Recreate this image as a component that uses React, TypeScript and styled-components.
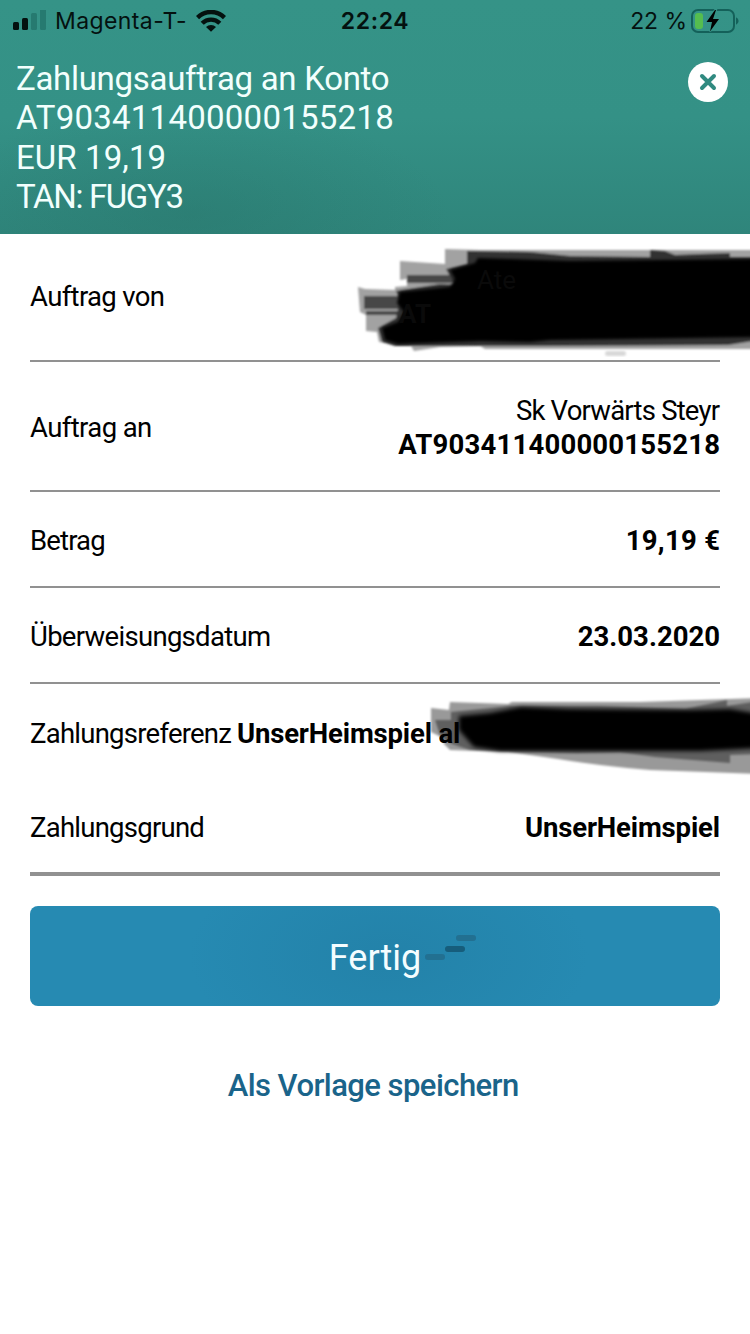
import React from 'react';
import styled, { createGlobalStyle } from 'styled-components';

const GlobalStyle = createGlobalStyle`
  * { box-sizing: border-box; }
  body { margin: 0; background: #fff; }
`;

const Screen = styled.main`
  width: 750px;
  height: 1334px;
  overflow: hidden;
  background: #fff;
  color: #000;
  font-family: Roboto, sans-serif;
`;

const Header = styled.header`
  height: 234px;
  background:
    radial-gradient(ellipse 260px 110px at 190px 215px, rgba(38, 112, 102, 0.35), transparent),
    linear-gradient(#359387 0%, #349186 50%, #2f857b 100%);
`;

const StatusBar = styled.div`
  height: 40px;
  display: grid;
  grid-template-columns: 1fr auto 1fr;
  align-items: center;
  padding: 0 11px 0 13px;
  color: #04110f;
  font: 400 23px/42px Inter, sans-serif;
`;

const StatusGroup = styled.div<{ $end?: boolean; $gap: number }>`
  display: flex;
  align-items: center;
  justify-content: ${p => (p.$end ? 'flex-end' : 'flex-start')};
  gap: ${p => p.$gap}px;
`;

const Label = styled.span<{ $spacing?: number; $bold?: boolean }>`
  white-space: nowrap;
  letter-spacing: ${p => p.$spacing ?? 0}px;
  margin-right: ${p => -(p.$spacing ?? 0)}px;
  font-weight: ${p => (p.$bold ? 700 : 'inherit')};
`;

const Clock = styled(Label)`
  margin-right: 2px;
  font-weight: 600;
`;

const HeaderBody = styled.div`
  display: flex;
  justify-content: space-between;
  align-items: flex-start;
  padding: 19px 22px 0 16px;
`;

const Title = styled.h1`
  display: flex;
  flex-direction: column;
  margin: 0;
  color: #f2fffd;
  font-size: 33px;
  font-weight: 400;
  line-height: 39.3px;
`;

const CloseButton = styled.button`
  width: 40px;
  height: 40px;
  margin-top: 3px;
  padding: 0;
  border: 0;
  border-radius: 50%;
  background: #fff;
  display: grid;
  place-items: center;
`;

const Details = styled.section`
  margin: 0 30px;
`;

const Row = styled.div<{ $height: number; $rule?: number }>`
  position: relative;
  height: ${p => p.$height}px;
  padding-top: 3px;
  display: flex;
  align-items: center;
  justify-content: space-between;
  border-bottom: ${p => p.$rule ?? 0}px solid #919191;
  font-size: 27.5px;
  line-height: 34px;

  &:first-child { padding-top: 0; }
`;

const Value = styled.div`
  display: flex;
  flex-direction: column;
  align-items: flex-end;
`;

const Reference = styled.div`
  display: flex;
  gap: 5px;
`;

const Marker = styled.svg<{ $left: number; $top: number }>`
  position: absolute;
  left: ${p => p.$left}px;
  top: ${p => p.$top}px;
  pointer-events: none;
`;

const Actions = styled.footer`
  padding: 30px 30px 0;
  display: flex;
  flex-direction: column;
  align-items: center;
`;

const PrimaryButton = styled.button`
  position: relative;
  width: 100%;
  height: 100px;
  padding: 3px 0 0;
  border: 0;
  border-radius: 8px;
  background: radial-gradient(ellipse 200px 110px at 52% 50%, #2382a9, #268ab2);
  color: #f4fdff;
  font: 400 36px/50px Roboto, sans-serif;
`;

const TextButton = styled.button`
  margin-top: 59px;
  padding: 0 3px 0 0;
  border: 0;
  background: none;
  color: #1a648a;
  font: 500 31px/42px Roboto, sans-serif;
`;

const SignalIcon = () => (
  <svg width="33" height="22" viewBox="0 0 33 22">
    <rect x="0" y="12" width="6" height="8" rx="1.5" fill="#04110f" />
    <rect x="9" y="8" width="6" height="12" rx="1.5" fill="#04110f" />
    <rect x="18" y="3" width="6" height="17" rx="1.5" fill="#267a70" />
    <rect x="27" y="-1" width="6" height="21" rx="1.5" fill="#267a70" />
  </svg>
);

const WifiIcon = () => (
  <svg width="30" height="22" viewBox="0 0 30 22">
    <g fill="none" stroke="#04110f" strokeWidth="4.4">
      <path d="M1.5 7.6a19 19 0 0 1 27 0" />
      <path d="M6.2 13.2a12.5 12.5 0 0 1 17.6 0" />
    </g>
    <path d="M10 17a7.6 7.6 0 0 1 10 0l-5 4.7z" fill="#04110f" />
  </svg>
);

const BatteryIcon = () => (
  <svg width="48" height="24" viewBox="0 0 48 24">
    <rect x="1" y="1" width="42" height="22" rx="6" fill="none" stroke="#14615a" strokeWidth="2" />
    <path d="M45 8.2q2.6 1.2 2.6 3.8t-2.6 3.8z" fill="#14615a" />
    <rect x="4" y="4" width="8" height="16" rx="3" fill="#55bd4f" />
    <path d="M24 1 15.5 13H21l-2 9.5L28 10h-6l3-9z" fill="#000" stroke="#359387" strokeWidth="2" paintOrder="stroke" />
  </svg>
);

const SenderMarks = () => (
  <Marker $left={320} $top={6} width="400" height="120" viewBox="350 240 400 120">
    <defs>
      <filter id="soft" x="-5%" y="-10%" width="110%" height="120%">
        <feGaussianBlur stdDeviation="0.9" />
      </filter>
      <filter id="softer" x="-5%" y="-10%" width="110%" height="120%">
        <feGaussianBlur stdDeviation="1.8" />
      </filter>
    </defs>
    <g filter="url(#soft)">
      <path d="M445 249L480 250H760V349H485L480 346L440 347L414 351L411 346L379 342L377 332L366 331V315L360 312L358 287L365 289L395 290V287L407 286V279L400 280V261L445 264Z" fill="#a2a2a2" />
      <path d="M364 296H400V309H364ZM366 311H400V315H366ZM407 275H460V283H407Z" fill="#474747" />
      <path d="M467 251L530 252L570 256L650 257V250L665 251L675 255L700 254L730 253V257H760V340L728 345L540 346L490 346L395 346L382 342L378 328L396 318L400 300L396 291L440 284L455 285L446 269L467 264Z" fill="#333" />
    </g>
    <path d="M450 270L475 263L478 258L570 261L760 259V337L550 340L530 342L480 341L398 344L385 340L382 328L398 322L404 312L397 303L400 292L450 287L455 279Z" fill="#000" filter="url(#softer)" />
    <g fill="#0a0a0a" fontSize="26">
      <text x="477" y="289">Ate</text>
      <text x="399" y="323" fontWeight="700">AT</text>
    </g>
    <rect x="605" y="351" width="21" height="5" rx="2.5" fill="#d8d8d8" filter="url(#soft)" />
  </Marker>
);

const ReferenceMarks = () => (
  <Marker $left={390} $top={6} width="330" height="100" viewBox="420 690 330 100">
    <defs>
      <filter id="soft-reference" x="-5%" y="-15%" width="110%" height="130%">
        <feGaussianBlur stdDeviation="1" />
      </filter>
      <filter id="softer-reference" x="-5%" y="-30%" width="110%" height="160%">
        <feGaussianBlur stdDeviation="2.2" />
      </filter>
    </defs>
    <g filter="url(#soft-reference)">
      <path d="M431 708L449 710L450 702L508 704L512 702L640 702L760 698V774L650 770Q600 766 558 759L509 752L450 750L444 744L443 738L431 732Z" fill="#000" opacity=".4" />
      <path d="M451 712L510 706L600 706L685 709L727 700V706L760 701V754L730 755V763L655 757L620 752L577 753L500 751L470 750L452 744L441 738L435 720L451 720Z" fill="#000" opacity=".38" />
    </g>
    <path d="M459 716L490 713L521 707L570 709L690 710L730 709L760 714V748L700 751L577 751L500 751L474 747L466 738L459 730Z" fill="#000" filter="url(#softer-reference)" />
  </Marker>
);

const ButtonMarks = () => (
  <Marker $left={394} $top={28} width="56" height="30" viewBox="0 0 56 30">
    <defs>
      <filter id="soft-dash" x="-10%" y="-30%" width="120%" height="160%">
        <feGaussianBlur stdDeviation="0.6" />
      </filter>
    </defs>
    <g filter="url(#soft-dash)">
      <rect x="1" y="20" width="20" height="6" rx="3" fill="#216f91" />
      <rect x="21" y="12" width="20" height="6" rx="3" fill="#185d7b" />
      <rect x="32" y="1" width="20" height="6" rx="3" fill="#216f91" />
    </g>
  </Marker>
);

export default function App() {
  return (
    <Screen>
      <GlobalStyle />
      <Header>
        <StatusBar>
          <StatusGroup $gap={9}>
            <SignalIcon />
            <Label $spacing={0.4}>Magenta-T-</Label>
            <WifiIcon />
          </StatusGroup>
          <Clock $spacing={0.6}>22:24</Clock>
          <StatusGroup $end $gap={4}>
            <Label $spacing={-0.1}>22 %</Label>
            <BatteryIcon />
          </StatusGroup>
        </StatusBar>
        <HeaderBody>
          <Title>
            <Label $spacing={-0.3}>Zahlungsauftrag an Konto</Label>
            <Label $spacing={0.25}>AT903411400000155218</Label>
            <Label $spacing={0.1}>EUR 19,19</Label>
            <Label $spacing={-1.35}>TAN: FUGY3</Label>
          </Title>
          <CloseButton aria-label="Schließen">
            <svg width="18" height="18" viewBox="0 0 18 18">
              <path d="M3 3 15 15M15 3 3 15" stroke="#308a80" strokeWidth="4" strokeLinecap="round" />
            </svg>
          </CloseButton>
        </HeaderBody>
      </Header>
      <Details>
        <Row $height={128} $rule={2}>
          <Label $spacing={-0.65}>Auftrag von</Label>
          <SenderMarks />
        </Row>
        <Row $height={130} $rule={2}>
          <Label $spacing={-0.6}>Auftrag an</Label>
          <Value>
            <Label $spacing={-0.8}>Sk Vorwärts Steyr</Label>
            <Label $bold $spacing={0.2}>AT903411400000155218</Label>
          </Value>
        </Row>
        <Row $height={96} $rule={2}>
          <Label $spacing={-0.85}>Betrag</Label>
          <Label $bold $spacing={0.3}>19,19 €</Label>
        </Row>
        <Row $height={96} $rule={2}>
          <Label $spacing={-0.7}>Überweisungsdatum</Label>
          <Label $bold>23.03.2020</Label>
        </Row>
        <Row $height={96}>
          <Reference>
            <Label $spacing={-0.75}>Zahlungsreferenz</Label>
            <Label $bold $spacing={-0.15}>UnserHeimspiel al</Label>
          </Reference>
          <ReferenceMarks />
        </Row>
        <Row $height={96} $rule={4}>
          <Label $spacing={-0.75}>Zahlungsgrund</Label>
          <Label $bold $spacing={-0.15}>UnserHeimspiel</Label>
        </Row>
      </Details>
      <Actions>
        <PrimaryButton>
          <Label>Fertig</Label>
          <ButtonMarks />
        </PrimaryButton>
        <TextButton>
          <Label $spacing={-0.55}>Als Vorlage speichern</Label>
        </TextButton>
      </Actions>
    </Screen>
  );
}
